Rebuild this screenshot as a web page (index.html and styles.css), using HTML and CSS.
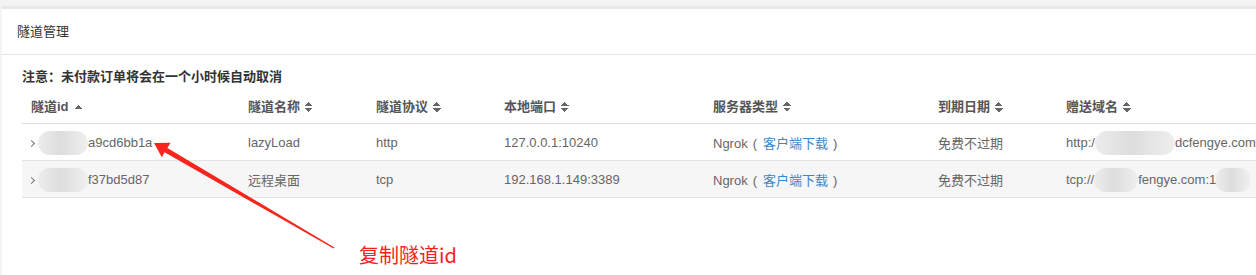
FILE: index.html
```html
<!DOCTYPE html>
<html lang="zh-CN">
<head>
    <meta charset="UTF-8">
    <title>隧道管理</title>
    <link rel="stylesheet" href="styles.css">
</head>
<body>
    <div class="page">
        <div class="panel">
            <div class="panel-heading">隧道管理</div>
            <div class="panel-body">
                <div class="notice">注意：未付款订单将会在一个小时候自动取消</div>
                <table class="tunnel-table">
                    <colgroup>
                        <col class="col-id">
                        <col class="col-name">
                        <col class="col-proto">
                        <col class="col-port">
                        <col class="col-server">
                        <col class="col-date">
                        <col class="col-domain">
                    </colgroup>
                    <thead>
                        <tr>
                            <th>隧道id <span class="sort asc"></span></th>
                            <th>隧道名称 <span class="sort"></span></th>
                            <th>隧道协议 <span class="sort"></span></th>
                            <th>本地端口 <span class="sort"></span></th>
                            <th>服务器类型 <span class="sort"></span></th>
                            <th>到期日期 <span class="sort"></span></th>
                            <th>赠送域名 <span class="sort"></span></th>
                        </tr>
                    </thead>
                    <tbody>
                        <tr>
                            <td class="id-cell"><span class="caret"></span><span class="mask mask-id"></span>a9cd6bb1a</td>
                            <td>lazyLoad</td>
                            <td>http</td>
                            <td>127.0.0.1:10240</td>
                            <td>Ngrok<span class="paren-l">(</span><a href="#">客户端下载</a><span class="paren-r">)</span></td>
                            <td>免费不过期</td>
                            <td>http:/<span class="mask mask-domain"></span>dcfengye.com</td>
                        </tr>
                        <tr>
                            <td class="id-cell"><span class="caret"></span><span class="mask mask-id"></span>f37bd5d87</td>
                            <td>远程桌面</td>
                            <td>tcp</td>
                            <td>192.168.1.149:3389</td>
                            <td>Ngrok<span class="paren-l">(</span><a href="#">客户端下载</a><span class="paren-r">)</span></td>
                            <td>免费不过期</td>
                            <td>tcp://<span class="mask mask-short"></span>fengye.com:1<span class="mask mask-port"></span></td>
                        </tr>
                    </tbody>
                </table>
            </div>
        </div>
    </div>

    <!-- screenshot annotation -->
    <svg class="annotation-arrow" width="1256" height="275" viewBox="0 0 1256 275">
        <polygon points="154,143 170.5,142.8 167.4,147.9 334.4,247.5 333.6,248.6 164.6,152.3 161.8,157.3" fill="#f7261d"/>
    </svg>
    <div class="annotation-label">复制隧道id</div>
</body>
</html>
```

FILE: styles.css
```css
body {
    margin: 0;
    background: #f3f3f3;
    font-family: "Liberation Sans", "Noto Sans CJK SC", sans-serif;
    font-size: 13px;
    color: #666;
    overflow: hidden;
    height: 275px;
}
.page {
    padding: 6px 0 0 2px;
}
.panel {
    background: #fff;
    border-top: 3px solid #e7e8ea;
    height: 266px;
    width: 1400px;
}
.panel-heading {
    height: 45px;
    line-height: 45px;
    padding: 0 15px;
    border-bottom: 1px solid #e6e6e6;
    color: #333;
}
.panel-body {
    padding: 12px 0 0 20px;
}
.notice {
    line-height: 20px;
    font-weight: bold;
    color: #333;
}
.tunnel-table {
    border-collapse: collapse;
    table-layout: fixed;
    width: 1275px;
}
.col-id { width: 217px; }
.col-name { width: 128px; }
.col-proto { width: 128px; }
.col-port { width: 209px; }
.col-server { width: 225px; }
.col-date { width: 128px; }
.col-domain { width: 240px; }
.tunnel-table th {
    height: 36px;
    padding: 0 9px;
    text-align: left;
    font-weight: bold;
    color: #555;
    border-bottom: 1px solid #dedede;
    white-space: nowrap;
}
.tunnel-table td {
    height: 36px;
    padding: 0 9px;
    border-bottom: 1px solid #e3e3e3;
    white-space: nowrap;
    overflow: hidden;
}
.tunnel-table tbody tr:nth-child(2) td {
    background: #f6f6f6;
}
.tunnel-table td.id-cell {
    padding-left: 7px;
}
.tunnel-table a {
    color: #3a86c8;
    text-decoration: none;
}
.paren-l {
    margin: 0 6px 0 5px;
}
.paren-r {
    margin-left: 5px;
}
.sort {
    display: inline-block;
    width: 8px;
    height: 10px;
    margin-left: 1px;
    vertical-align: -1px;
    background:
        linear-gradient(to bottom right, transparent 50%, #666 50%) 0 0 / 4px 4px no-repeat,
        linear-gradient(to bottom left, transparent 50%, #666 50%) 4px 0 / 4px 4px no-repeat,
        linear-gradient(to top right, transparent 50%, #666 50%) 0 6px / 4px 4px no-repeat,
        linear-gradient(to top left, transparent 50%, #666 50%) 4px 6px / 4px 4px no-repeat;
}
.sort.asc {
    height: 4px;
    margin-left: 3px;
    vertical-align: 2px;
    background:
        linear-gradient(to bottom right, transparent 50%, #666 50%) 0 0 / 4px 4px no-repeat,
        linear-gradient(to bottom left, transparent 50%, #666 50%) 4px 0 / 4px 4px no-repeat;
}
.caret {
    display: inline-block;
    width: 4px;
    height: 4px;
    border-top: 1.5px solid #777;
    border-right: 1.5px solid #777;
    transform: rotate(45deg);
    margin: 0 4px 0 0;
    vertical-align: 1px;
}
.mask {
    display: inline-block;
    height: 24px;
    margin: -6px 0;
    vertical-align: middle;
    border-radius: 12px;
    background: linear-gradient(90deg, #ececec 0, #e4e4e4 25%, #dddddd 45%, #e5e5e5 70%, #efefef 100%);
}
.mask-id {
    width: 50px;
}
.mask-domain {
    width: 80px;
}
.mask-short {
    width: 44px;
}
.mask-port {
    width: 34px;
    border-radius: 10px;
}
.annotation-arrow {
    position: absolute;
    top: 0;
    left: 0;
}
.annotation-label {
    position: absolute;
    left: 359px;
    top: 243px;
    font-family: "Noto Sans CJK SC", sans-serif;
    font-size: 20px;
    line-height: 24px;
    color: #fa1e1e;
}
```
